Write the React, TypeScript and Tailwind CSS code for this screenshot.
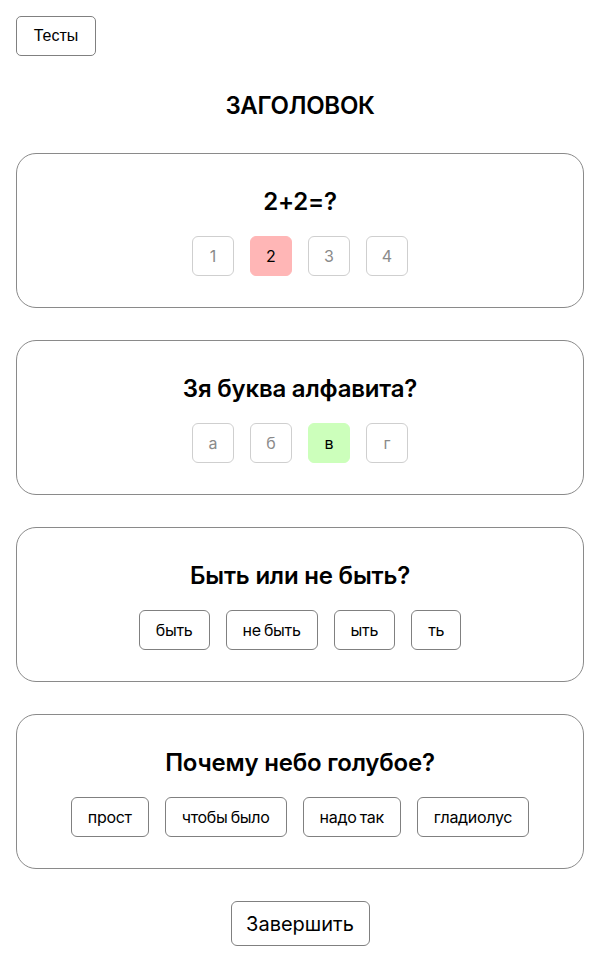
import React, { useState } from 'react';

type Question = {
  title: string;
  options: string[];
  selected?: number;
  tone?: 'red' | 'green';
  compact?: boolean;
};

const questions: Question[] = [
  { title: '2+2=?', options: ['1', '2', '3', '4'], selected: 1, tone: 'red', compact: true },
  { title: '3я буква алфавита?', options: ['а', 'б', 'в', 'г'], selected: 2, tone: 'green', compact: true },
  { title: 'Быть или не быть?', options: ['быть', 'не быть', 'ыть', 'ть'] },
  { title: 'Почему небо голубое?', options: ['прост', 'чтобы было', 'надо так', 'гладиолус'] },
];

const QuestionCard: React.FC<{ q: Question }> = ({ q }) => {
  const [picked, setPicked] = useState<number | undefined>(q.selected);

  return (
    <div className="flex flex-col items-center rounded-[20px] border border-[#8a8a8a] pt-8 pb-[31px]">
      <h2 className="h-8 text-[24px] leading-8 font-semibold text-black tracking-[-0.2px]">{q.title}</h2>
      <div className="mt-[18px] flex gap-4">
        {q.options.map((opt, idx) => {
          const active = picked === idx;
          let cls = 'border border-[#808080] text-black px-4 tracking-[-0.3px] [word-spacing:-1px]';
          if (q.compact) {
            cls = 'w-[42px] border border-[#cfcfcf] text-[#8a8a8a]';
            if (active) {
              cls = q.tone === 'red'
                ? 'w-[42px] border border-[#ffb6b6] bg-[#ffb6b6] text-black'
                : 'w-[42px] border border-[#ccffbb] bg-[#ccffbb] text-black';
            }
          }
          return (
            <button
              key={idx}
              onClick={() => setPicked(idx)}
              className={`h-10 rounded-md text-base ${cls}`}
            >
              {opt}
            </button>
          );
        })}
      </div>
    </div>
  );
};

export default function App() {
  return (
    <div className="min-h-screen bg-white px-4 pt-4 pb-4 font-['Inter','Noto_Sans',sans-serif] text-black">
      <button className="h-10 w-20 rounded-[5px] border border-[#808080] font-['Liberation_Sans',Arial,sans-serif] text-base">
        Тесты
      </button>
      <h1 className="mt-[34px] h-8 text-center text-[24px] leading-8 font-semibold tracking-[-0.3px]">ЗАГОЛОВОК</h1>
      <div className="mt-[31px] flex flex-col gap-8">
        {questions.map((q, i) => (
          <QuestionCard key={i} q={q} />
        ))}
      </div>
      <div className="mt-8 flex justify-center">
        <button className="h-[45px] w-[139px] rounded-md border border-[#808080] text-[20px]">Завершить</button>
      </div>
    </div>
  );
}
